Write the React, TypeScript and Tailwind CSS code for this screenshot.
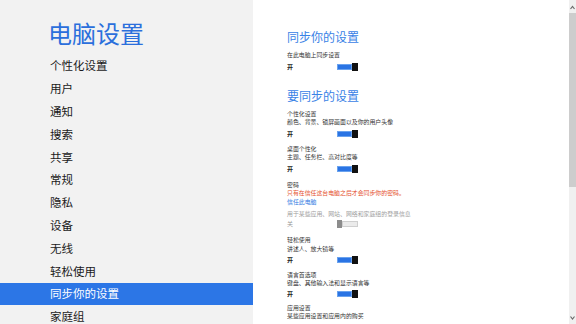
import React from "react";

const cjk = { fontFamily: '"Noto Sans CJK SC", "Noto Sans", sans-serif' };

const navItems = [
  "个性化设置",
  "用户",
  "通知",
  "搜索",
  "共享",
  "常规",
  "隐私",
  "设备",
  "无线",
  "轻松使用",
  "同步你的设置",
  "家庭组",
];

function Toggle({ on = true }: { on?: boolean }) {
  if (!on) {
    return (
      <div className="flex items-center">
        <div className="h-[8px] w-[5px] bg-[#8c8c8c]" />
        <div className="h-[6px] w-[16px] border border-[#cfcfcf] bg-[#ebebeb]" />
      </div>
    );
  }
  return (
    <div className="flex items-center">
      <div className="h-[6px] w-[15px] border border-[#6aa2ee] bg-[#2a74e4]" />
      <div className="h-[8px] w-[6px] bg-[#111]" />
    </div>
  );
}

function SwitchRow({ on = true, className = "" }: { on?: boolean; className?: string }) {
  return (
    <div className={`flex h-[10px] items-center ${className}`}>
      <span
        className={`w-[50px] text-[6px] leading-[10px] ${on ? "font-bold text-[#222]" : "text-[#999]"}`}
      >
        {on ? "开" : "关"}
      </span>
      <Toggle on={on} />
    </div>
  );
}

function Line({
  children,
  className = "",
  tone = "text-[#333]",
}: {
  children: React.ReactNode;
  className?: string;
  tone?: string;
}) {
  return <p className={`text-[5.9px] leading-[8.5px] ${tone} ${className}`}>{children}</p>;
}

export default function App() {
  return (
    <div className="flex h-[324px] w-[576px] overflow-hidden bg-white" style={cjk}>
      <aside className="w-[253px] shrink-0 bg-[#f2f2f2]">
        <h1 className="pb-[7.6px] pl-[48px] pt-[19px] text-[24px] leading-[28px] text-[#2b6fdc]">
          电脑设置
        </h1>
        <nav>
          {navItems.map((item) => (
            <div
              key={item}
              className={`flex h-[22.8px] items-center pl-[50px] text-[11.5px] ${
                item === "同步你的设置" ? "bg-[#2c76e6] text-white" : "text-[#1a1a1a]"
              }`}
            >
              {item}
            </div>
          ))}
        </nav>
      </aside>

      <main className="flex-1 pl-[34px]">
        <h2 className="mt-[30px] text-[12px] leading-[14px] text-[#3a82e6]">同步你的设置</h2>
        <Line className="mt-[6.75px]">在此电脑上同步设置</Line>
        <SwitchRow className="mt-[2.75px]" />

        <h2 className="mt-[16.5px] text-[12px] leading-[14px] text-[#3a82e6]">要同步的设置</h2>

        <Line className="mt-[7.25px]">个性化设置</Line>
        <Line>颜色、背景、锁屏画面以及你的用户头像</Line>
        <SwitchRow className="mt-[2px]" />

        <Line className="mt-[5.75px]">桌面个性化</Line>
        <Line>主题、任务栏、高对比度等</Line>
        <SwitchRow className="mt-[2px]" />

        <Line className="mt-[7px]">密码</Line>
        <Line tone="text-[#e5502e]">只有在信任这台电脑之后才会同步你的密码。</Line>
        <Line tone="text-[#2f7ae2]">信任此电脑</Line>
        <Line tone="text-[#a0a0a0]" className="mt-[3.5px]">
          用于某些应用、网站、网络和家庭组的登录信息
        </Line>
        <SwitchRow on={false} className="mt-[1px]" />

        <Line className="mt-[7px]">轻松使用</Line>
        <Line>讲述人、放大镜等</Line>
        <SwitchRow className="mt-[1.5px]" />

        <Line className="mt-[6px]">语言首选项</Line>
        <Line>键盘、其他输入法和显示语言等</Line>
        <SwitchRow className="mt-[1.5px]" />

        <Line className="mt-[4.5px]">应用设置</Line>
        <Line>某些应用设置和应用内的购买</Line>
      </main>

      <div className="flex w-[7px] shrink-0 flex-col items-center bg-[#f0f0f0]">
        <svg width="7" height="13" viewBox="0 0 7 13" className="shrink-0">
          <path d="M1.5 9 L3.5 6.5 L5.5 9" fill="none" stroke="#6b6b6b" strokeWidth="1.2" />
        </svg>
        <div className="h-[174px] w-[7px] bg-[#cdcdcd]" />
        <div className="flex-1" />
        <svg width="7" height="12" viewBox="0 0 7 12" className="shrink-0">
          <path d="M1.5 4.5 L3.5 7 L5.5 4.5" fill="none" stroke="#6b6b6b" strokeWidth="1.2" />
        </svg>
      </div>
    </div>
  );
}
